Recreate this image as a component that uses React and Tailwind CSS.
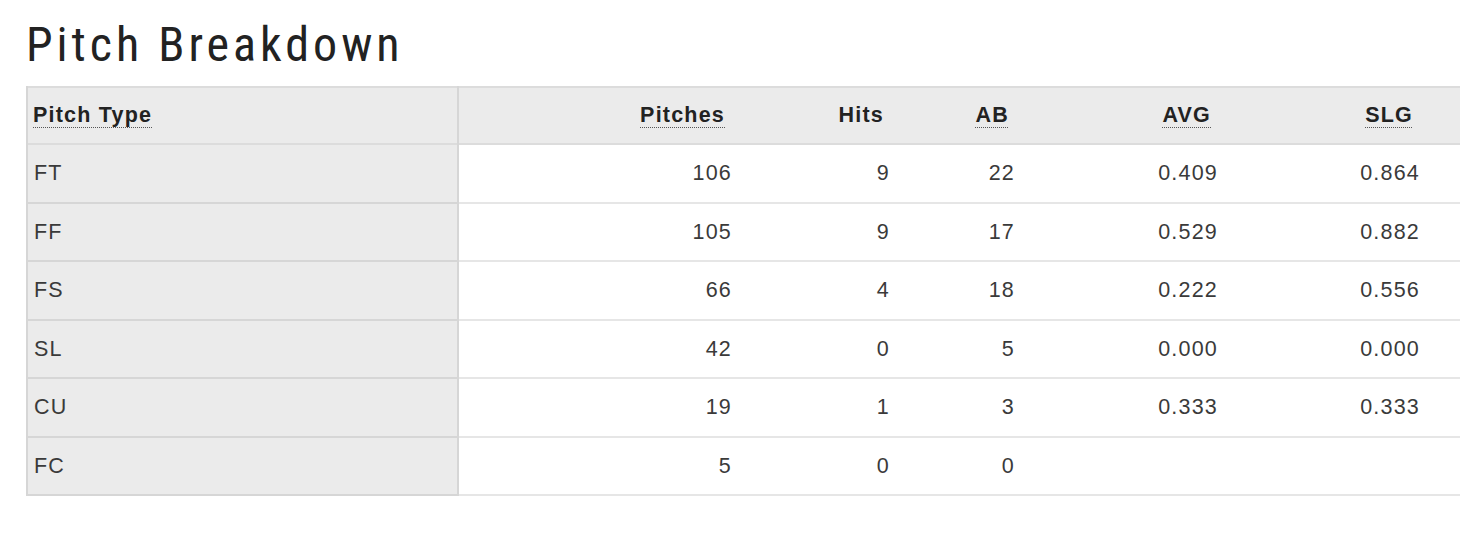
const rows = [
  { type: "FT", pitches: 106, hits: 9, ab: 22, avg: "0.409", slg: "0.864" },
  { type: "FF", pitches: 105, hits: 9, ab: 17, avg: "0.529", slg: "0.882" },
  { type: "FS", pitches: 66, hits: 4, ab: 18, avg: "0.222", slg: "0.556" },
  { type: "SL", pitches: 42, hits: 0, ab: 5, avg: "0.000", slg: "0.000" },
  { type: "CU", pitches: 19, hits: 1, ab: 3, avg: "0.333", slg: "0.333" },
  { type: "FC", pitches: 5, hits: 0, ab: 0, avg: "", slg: "" },
];

const Abbr = ({ children }) => (
  <span className="underline decoration-dotted decoration-1 underline-offset-[5px] decoration-[#555]">
    {children}
  </span>
);

const App = () => {
  return (
    <div className="h-[542px] w-[1460px] overflow-hidden bg-white pl-[26px] pt-[21px]">
      <h1 className="mb-[17px] font-['Roboto',sans-serif] text-[48px] font-normal leading-none tracking-[4px] text-[#222] [font-stretch:75%]">
        Pitch Breakdown
      </h1>
      <table className="w-[1480px] table-fixed border-collapse font-['Liberation_Sans',Arial,sans-serif] text-[21.5px] tracking-[1.2px] text-[#3a3a3a]">
        <colgroup>
          <col className="w-[431px]" />
          <col className="w-[285px]" />
          <col className="w-[158px]" />
          <col className="w-[125px]" />
          <col className="w-[203px]" />
          <col className="w-[202px]" />
          <col />
        </colgroup>
        <thead>
          <tr className="h-[57px] border-t-2 border-b-2 border-[#dcdcdc] bg-[#ebebeb] font-bold text-[#222]">
            <th className="border-l-2 border-r-2 border-[#d6d6d6] pl-[5px] text-left">
              <Abbr>Pitch Type</Abbr>
            </th>
            <th className="pr-[18px] text-right">
              <Abbr>Pitches</Abbr>
            </th>
            <th className="pr-[17px] text-right">Hits</th>
            <th className="pr-[17px] text-right">
              <Abbr>AB</Abbr>
            </th>
            <th className="pr-[18px] text-right">
              <Abbr>AVG</Abbr>
            </th>
            <th className="pr-[18px] text-right">
              <Abbr>SLG</Abbr>
            </th>
            <th></th>
          </tr>
        </thead>
        <tbody>
          {rows.map((r) => (
            <tr key={r.type} className="h-[58.5px] border-b-2 border-[#e6e6e6]">
              <td className="border-l-2 border-r-2 border-b-2 border-[#d6d6d6] bg-[#ebebeb] pl-[6px]">
                {r.type}
              </td>
              <td className="pr-[11px] text-right">{r.pitches}</td>
              <td className="pr-[11px] text-right">{r.hits}</td>
              <td className="pr-[11px] text-right">{r.ab}</td>
              <td className="pr-[11px] text-right">{r.avg}</td>
              <td className="pr-[11px] text-right">{r.slg}</td>
              <td></td>
            </tr>
          ))}
        </tbody>
      </table>
    </div>
  );
};

export default App;
